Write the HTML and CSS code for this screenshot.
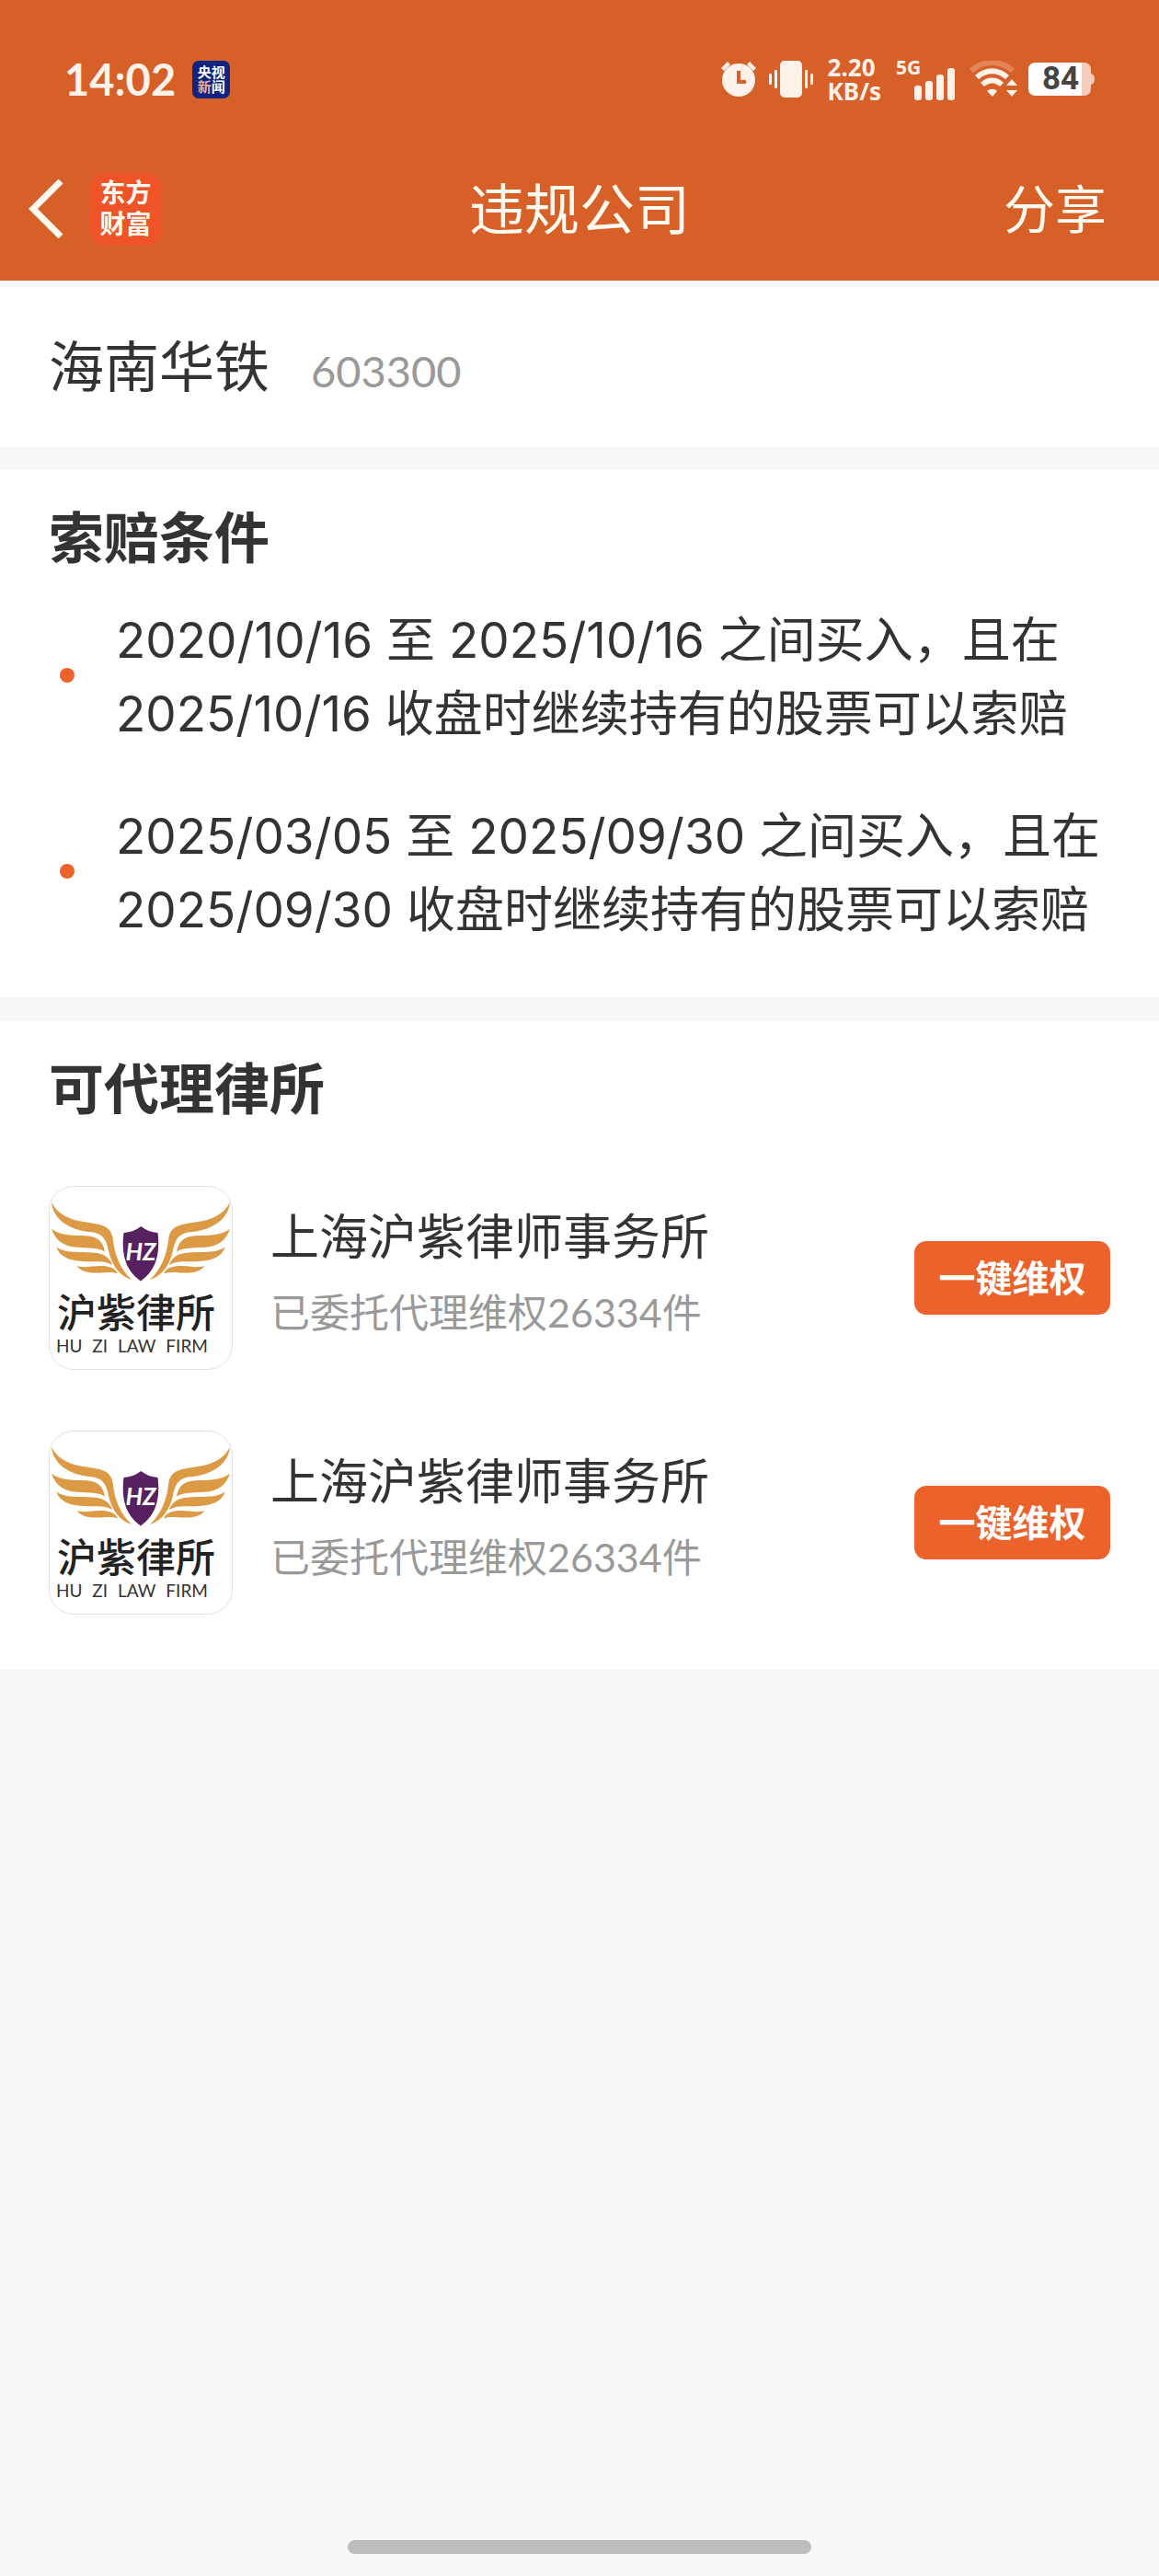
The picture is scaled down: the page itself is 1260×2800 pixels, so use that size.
FILE: index.html
```html
<!DOCTYPE html>
<html lang="zh-CN">
<head>
    <meta charset="UTF-8">
    <meta name="viewport" content="width=device-width, initial-scale=1.0">
    <title>违规公司</title>
    <link rel="stylesheet" href="styles.css">
</head>
<body>
    <!-- wings and shield, used once per firm -->
    <svg class="sprite" aria-hidden="true">
        <symbol id="huzi-wings" viewBox="0 0 600 320">
            <g id="wing" fill="#dc9a45">
                <path d="M6 51C30 95 70 109 120 116C175 123 202 131 208 168C214 223 232 271 271 306C230 293 206 261 194 211C186 168 172 151 130 148C65 141 12 108 6 51Z"/>
                <path d="M6 138C40 163 80 158 120 161C160 164 176 181 182 214C160 199 130 202 90 199C45 195 18 175 6 138Z"/>
                <path d="M22 198C50 217 85 214 125 215C172 215 196 228 207 257C180 241 150 247 110 245C65 243 34 231 22 198Z"/>
                <path d="M90 260C115 268 140 260 165 260C200 260 216 268 225 286C200 277 180 284 150 283C120 282 102 277 90 260Z"/>
            </g>
            <use href="#wing" transform="matrix(-1 0 0 1 600 0)"/>
            <path d="M301 130C317 143 335 150 356 151C364 213 354 273 300 310C246 273 236 213 244 151C265 150 285 143 301 130Z" fill="#57215f"/>
        </symbol>
    </svg>

    <header class="header">
        <div class="status-bar">
            <div class="status-left">
                <span class="time">14:02</span>
                <span class="news-badge">央视<br><em>新</em>闻</span>
            </div>
            <div class="status-right">
                <svg class="alarm" width="40" height="40" viewBox="0 0 40 40">
                    <circle cx="20" cy="21" r="18"/>
                    <path d="M1 8L8 1L11 4L4 11ZM39 8L32 1L29 4L36 11Z"/>
                    <path d="M20 11V23H28" fill="none" stroke="#d75f28" stroke-width="4"/>
                </svg>
                <svg class="vibrate" width="48" height="40" viewBox="0 0 48 40">
                    <rect x="12" y="0" width="24" height="40" rx="5"/>
                    <rect x="6" y="10" width="3" height="20" rx="1"/>
                    <rect x="0" y="14" width="3" height="12" rx="1"/>
                    <rect x="39" y="10" width="3" height="20" rx="1"/>
                    <rect x="45" y="14" width="3" height="12" rx="1"/>
                </svg>
                <span class="speed">2.20<br>KB/s</span>
                <div class="signal">
                    <svg width="64" height="46" viewBox="0 0 64 46">
                        <rect x="20" y="30" width="8" height="16" rx="3"/>
                        <rect x="32" y="25" width="8" height="21" rx="3"/>
                        <rect x="44" y="18" width="8" height="28" rx="3"/>
                        <rect x="56" y="11" width="8" height="35" rx="3"/>
                    </svg>
                    <span>5G</span>
                </div>
                <svg class="wifi" width="52" height="40" viewBox="0 0 52 40">
                    <path d="M2 11C15 -1 34 -1 47 11" fill="none" stroke="#e38557" stroke-width="6"/>
                    <path d="M8 18C18 9 31 9 41 18M14 26C20 20 29 20 35 26" fill="none" stroke="#fff2eb" stroke-width="6"/>
                    <path d="M19 33C22 30 27 30 30 33L25 39Z"/>
                    <path d="M46 20L52 27H40ZM46 39L52 32H40Z"/>
                </svg>
                <div class="battery">
                    <svg width="72" height="36" viewBox="0 0 72 36">
                        <path d="M58 0H60Q68 0 68 8V12Q72 13 72 18Q72 23 68 24V28Q68 36 60 36H58Z" fill="#f4cdbd"/>
                        <path d="M8 0H58V36H8Q0 36 0 28V8Q0 0 8 0Z" fill="#fff"/>
                    </svg>
                    <span>84</span>
                </div>
            </div>
        </div>
        <nav class="nav">
            <div class="nav-left">
                <button class="back" type="button" aria-label="返回">
                    <svg width="40" height="64" viewBox="0 0 40 64">
                        <path d="M36 2L6 32L36 62" fill="none" stroke="#fffaf0" stroke-width="7"/>
                    </svg>
                </button>
                <span class="app-icon">东方<br>财富</span>
            </div>
            <h1>违规公司</h1>
            <button class="share" type="button">分享</button>
        </nav>
    </header>

    <main>
        <section class="card company">
            <span class="company-name">海南华铁</span>
            <span class="company-code">603300</span>
        </section>

        <section class="card conditions">
            <h2>索赔条件</h2>
            <ul>
                <li>2020/10/16 至 2025/10/16 之间买入，且在<br>2025/10/16 收盘时继续持有的股票可以索赔</li>
                <li>2025/03/05 至 2025/09/30 之间买入，且在<br>2025/09/30 收盘时继续持有的股票可以索赔</li>
            </ul>
        </section>

        <section class="card firms">
            <h2>可代理律所</h2>
            <div class="firm">
                <div class="firm-logo">
                    <div class="wings">
                        <svg><use href="#huzi-wings"/></svg>
                        <span class="mark">HZ</span>
                    </div>
                    <div class="logo-cn">沪紫律所</div>
                    <div class="logo-en"><span>HU</span> <span>ZI</span> <span>LAW</span> <span>FIRM</span></div>
                </div>
                <div class="firm-info">
                    <h3>上海沪紫律师事务所</h3>
                    <p>已委托代理维权26334件</p>
                </div>
                <button class="claim-btn" type="button">一键维权</button>
            </div>
            <div class="firm">
                <div class="firm-logo">
                    <div class="wings">
                        <svg><use href="#huzi-wings"/></svg>
                        <span class="mark">HZ</span>
                    </div>
                    <div class="logo-cn">沪紫律所</div>
                    <div class="logo-en"><span>HU</span> <span>ZI</span> <span>LAW</span> <span>FIRM</span></div>
                </div>
                <div class="firm-info">
                    <h3>上海沪紫律师事务所</h3>
                    <p>已委托代理维权26334件</p>
                </div>
                <button class="claim-btn" type="button">一键维权</button>
            </div>
        </section>
    </main>

    <div class="home-indicator"></div>
</body>
</html>
```
FILE: styles.css
```css
* { margin: 0; padding: 0; box-sizing: border-box; }
body { min-height: 100vh; display: flex; flex-direction: column; background-color: #f8f8fb; color: #333; font-family: Lato, "Noto Sans CJK SC", sans-serif; }
button { border: none; background: none; font-family: inherit; cursor: pointer; }
.sprite { position: absolute; width: 0; height: 0; }

/* header */
.header { background-color: #d75f28; padding-bottom: 23px; }
.status-bar { height: 172px; padding: 0 70px; display: flex; align-items: center; justify-content: space-between; color: #fff2eb; }
.status-left { display: flex; align-items: center; gap: 18px; }
.time { font-size: 47px; line-height: 60px; font-weight: 700; }
.news-badge { width: 41px; height: 41px; padding-top: 4px; border-radius: 7px; background-color: #10247f; color: #fff; font-size: 15px; line-height: 16px; font-weight: 700; text-align: center; }
.news-badge em { font-style: normal; color: #e8b096; }
.status-right { display: flex; align-items: center; fill: #fff2eb; }
.status-right svg { display: block; }
.vibrate { margin-left: 13px; }
.speed { margin-left: 16px; font-family: "Noto Sans", sans-serif; font-size: 26px; line-height: 26px; font-weight: 700; }
.signal { position: relative; margin-left: 16px; }
.signal span { position: absolute; left: 0; top: -4px; font-family: "Noto Sans", sans-serif; font-size: 21px; line-height: 28px; font-weight: 700; }
.wifi { margin-left: 16px; }
.battery { position: relative; margin-left: 12px; }
.battery span { position: absolute; left: 15px; top: 0; color: #444; font-family: Roboto, sans-serif; font-size: 35px; line-height: 36px; font-weight: 700; }

.nav { height: 110px; padding: 0 57px; display: grid; grid-template-columns: 1fr auto 1fr; align-items: center; color: #fffaf0; }
.nav-left { display: flex; align-items: center; gap: 27px; margin-left: -27px; }
.back { height: 64px; }
.app-icon { width: 79px; height: 79px; padding-top: 4px; border-radius: 18px; background-color: #ef5429; font-size: 28px; line-height: 34px; font-weight: 700; text-align: center; }
h1 { font-size: 60px; line-height: 84px; font-weight: 400; }
.share { justify-self: end; color: #fffaf0; font-size: 56px; line-height: 84px; }

/* cards */
.card { padding: 31px 53px 55px; margin-bottom: 26px; background-color: #fff; }
.company { display: flex; align-items: baseline; gap: 45px; padding-top: 51px; padding-bottom: 45px; }
.company-name { font-size: 60px; line-height: 84px; }
.company-code { font-size: 47px; line-height: 60px; color: #999; }
h2 { font-size: 60px; line-height: 84px; font-weight: 700; }

.conditions ul { margin-top: 30px; display: flex; flex-direction: column; gap: 53px; list-style: none; }
.conditions li { position: relative; padding-left: 73px; font-family: Inter, "Noto Sans CJK SC", sans-serif; font-size: 53px; line-height: 80px; }
.conditions li::before { content: ""; position: absolute; left: 12px; top: 50%; width: 16px; height: 16px; margin-top: -10px; border-radius: 50%; background-color: #ec622b; }

.firms { margin-bottom: 0; padding-bottom: 60px; }
.firm { display: flex; align-items: center; margin-top: 66px; }
h2 + .firm { margin-top: 64px; }
.firm-info { flex: 1; margin-left: 41px; }
.firm-info h3 { font-size: 53px; line-height: 56px; font-weight: 400; }
.firm-info p { margin-top: 20px; font-size: 43px; line-height: 70px; color: #999; }
.claim-btn { width: 213px; height: 80px; border-radius: 13px; background-color: #ec622b; color: #fff; font-size: 40px; line-height: 60px; font-weight: 700; }

/* firm logo */
.firm-logo { width: 200px; height: 200px; border: 1px solid #e2e2e2; border-radius: 27px; flex-shrink: 0; }
.wings { position: relative; height: 106px; }
.wings svg { display: block; width: 100%; height: 106px; }
.mark { position: absolute; left: 0; right: 0; top: 55px; color: #fff; font-size: 26px; line-height: 30px; font-weight: 700; font-style: italic; text-align: center; }
.logo-cn { margin-top: 6px; padding-left: 8px; color: #222; font-size: 43px; line-height: 50px; font-weight: 500; }
.logo-en { padding: 0 26px 0 7px; display: flex; justify-content: space-between; font-size: 19px; line-height: 22px; }

.home-indicator { width: 40%; height: 15px; margin: auto auto 24px; border-radius: 8px; background-color: #bdbdbd; }
```
